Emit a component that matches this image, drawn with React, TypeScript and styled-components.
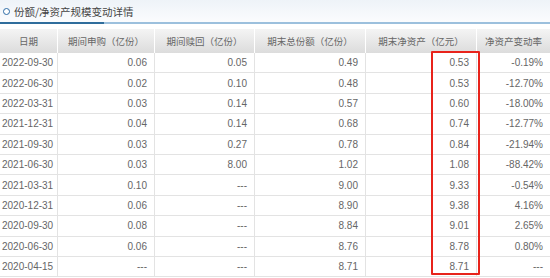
import React from 'react';
import styled, { createGlobalStyle } from 'styled-components';

type Row = {
    date: string;
    buy: string;
    redeem: string;
    shares: string;
    nav: string;
    change: string;
};

const rows: Row[] = [
    { date: '2022-09-30', buy: '0.06', redeem: '0.05', shares: '0.49', nav: '0.53', change: '-0.19%' },
    { date: '2022-06-30', buy: '0.02', redeem: '0.10', shares: '0.48', nav: '0.53', change: '-12.70%' },
    { date: '2022-03-31', buy: '0.03', redeem: '0.14', shares: '0.57', nav: '0.60', change: '-18.00%' },
    { date: '2021-12-31', buy: '0.04', redeem: '0.14', shares: '0.68', nav: '0.74', change: '-12.77%' },
    { date: '2021-09-30', buy: '0.03', redeem: '0.27', shares: '0.78', nav: '0.84', change: '-21.94%' },
    { date: '2021-06-30', buy: '0.03', redeem: '8.00', shares: '1.02', nav: '1.08', change: '-88.42%' },
    { date: '2021-03-31', buy: '0.10', redeem: '---', shares: '9.00', nav: '9.33', change: '-0.54%' },
    { date: '2020-12-31', buy: '0.06', redeem: '---', shares: '8.90', nav: '9.38', change: '4.16%' },
    { date: '2020-09-30', buy: '0.08', redeem: '---', shares: '8.84', nav: '9.01', change: '2.65%' },
    { date: '2020-06-30', buy: '0.06', redeem: '---', shares: '8.76', nav: '8.78', change: '0.80%' },
    { date: '2020-04-15', buy: '---', redeem: '---', shares: '8.71', nav: '8.71', change: '---' },
];

const columns = '58px 97px 100px 111px 111px 73px';

const App: React.FC = () => {
    return (
        <>
            <GlobalStyle />
            <Page>
                <TitleBar>
                    <TitleDot />
                    <Title>份额/净资产规模变动详情</Title>
                </TitleBar>
                <Underline>
                    <UnderlineActive />
                </Underline>

                <Table>
                    <HeaderRow>
                        <HeadCell>日期</HeadCell>
                        <HeadCell>期间申购（亿份）</HeadCell>
                        <HeadCell>期间赎回（亿份）</HeadCell>
                        <HeadCell>期末总份额（亿份）</HeadCell>
                        <HeadCell>期末净资产（亿元）</HeadCell>
                        <HeadCell $last>净资产变动率</HeadCell>
                    </HeaderRow>
                    {rows.map(r => (
                        <DataRow key={r.date}>
                            <Cell $align="left">{r.date}</Cell>
                            <Cell>{r.buy}</Cell>
                            <Cell>{r.redeem}</Cell>
                            <Cell>{r.shares}</Cell>
                            <Cell>{r.nav}</Cell>
                            <Cell $last>{r.change}</Cell>
                        </DataRow>
                    ))}
                    <Highlight />
                </Table>
            </Page>
        </>
    );
};

const GlobalStyle = createGlobalStyle`
  body {
    margin: 0;
    background: #fff;
    font-family: 'Liberation Sans', 'Noto Sans CJK SC', sans-serif;
  }
`;

const Page = styled.div`
  width: 550px;
  height: 278px;
  overflow: hidden;
`;

const TitleBar = styled.div`
  height: 22px;
  display: flex;
  align-items: center;
  gap: 4px;
  padding-left: 3px;
  background: linear-gradient(to bottom, #eef3f8, #fbfcfe);
`;

const TitleDot = styled.span`
  width: 5px;
  height: 5px;
  border: 1.5px solid #2b6aa5;
  border-radius: 50%;
  background: #fff;
`;

const Title = styled.span`
  font-family: 'Noto Sans CJK SC', sans-serif;
  font-size: 10.5px;
  color: #444;
`;

const Underline = styled.div`
  height: 2px;
  background: #9cc0dd;
  margin-bottom: 5px;
`;

const UnderlineActive = styled.div`
  width: 104px;
  height: 2px;
  background: #2f6d9c;
`;

const Table = styled.div`
  position: relative;
`;

const HeaderRow = styled.div`
  display: grid;
  grid-template-columns: ${columns};
  height: 24px;
  background: linear-gradient(to bottom, #f4f4f4, #dcdcdc);
`;

const HeadCell = styled.div<{ $last?: boolean }>`
  display: flex;
  align-items: center;
  justify-content: center;
  font-family: 'Noto Sans CJK SC', sans-serif;
  font-size: 9.5px;
  color: #666;
  border-right: ${p => (p.$last ? 'none' : '1px solid #fff')};
`;

const DataRow = styled.div`
  display: grid;
  grid-template-columns: ${columns};
  height: 20.4px;
  box-sizing: border-box;
  border-bottom: 1px solid #e3e3e3;
`;

const Cell = styled.div<{ $align?: 'left' | 'right'; $last?: boolean }>`
  display: flex;
  align-items: center;
  justify-content: ${p => (p.$align === 'left' ? 'flex-start' : 'flex-end')};
  padding: ${p => (p.$align === 'left' ? '0 0 0 2px' : '0 7px 0 0')};
  font-size: 10px;
  color: #666;
  border-right: ${p => (p.$last ? 'none' : '1px solid #e3e3e3')};
`;

const Highlight = styled.div`
  position: absolute;
  left: 431px;
  top: 22px;
  width: 49px;
  height: 224px;
  box-sizing: border-box;
  border: 2px solid #e8231b;
  border-radius: 1px;
  pointer-events: none;
`;

export default App;
